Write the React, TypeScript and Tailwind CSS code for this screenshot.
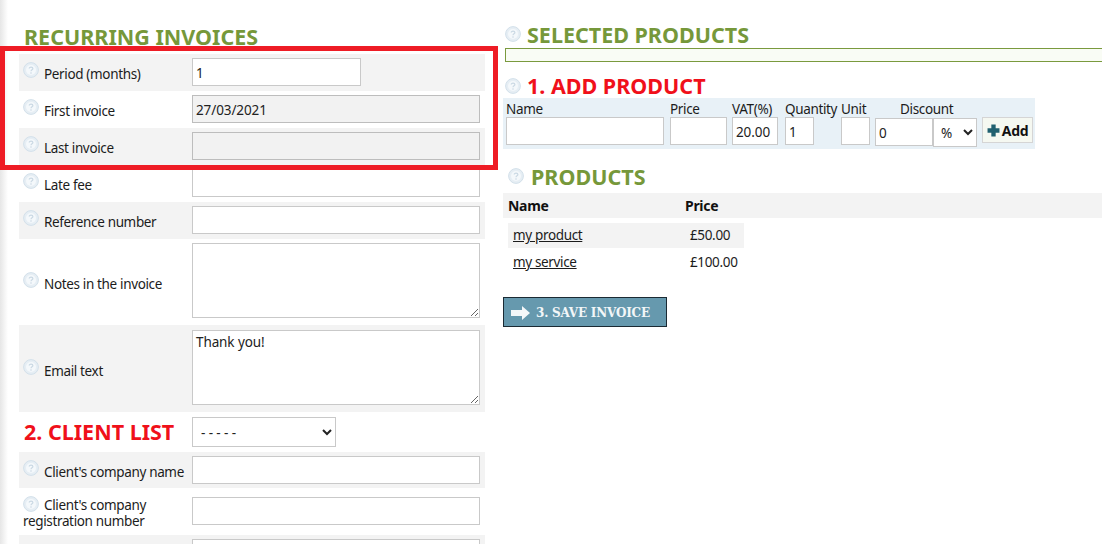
import React from "react";

const font = "font-['Noto_Sans',sans-serif]";
const inputCls = "block border px-[3px] pt-px text-[13.5px] tracking-[-0.1px] text-[#222] outline-none font-['Noto_Sans',sans-serif]";
const normal = "border-[#c9c9c9] bg-white";
const bodyText = "text-[13.5px] tracking-[-0.35px] text-[#1c1c1c]";
const heading = "text-[21.5px] font-bold whitespace-nowrap";

function Help({ className = "" }: { className?: string }) {
  return (
    <svg viewBox="0 0 16 16" className={`shrink-0 ${className}`} width="16" height="16">
      <circle cx="8" cy="8" r="7.4" fill="#e6eef4" stroke="#d3e0ea" strokeWidth="1" />
      <circle cx="8" cy="8" r="5" fill="#f4f8fb" />
      <path d="M6.2 6.5 C6.2 4.6 9.9 4.6 9.9 6.5 C9.9 7.8 8 7.7 8 9.3" fill="none" stroke="#cbd9e4" strokeWidth="1.2" />
      <circle cx="8" cy="11" r="0.8" fill="#cbd9e4" />
    </svg>
  );
}

function Row({
  label,
  gray,
  h,
  value = "",
  disabled,
  short,
}: {
  label: string;
  gray?: boolean;
  h: string;
  value?: string;
  disabled?: boolean;
  short?: boolean;
}) {
  return (
    <div className={`flex items-center ${h} ${gray ? "bg-[#f3f3f3]" : "bg-white"}`}>
      <div className="relative flex w-[173px] shrink-0 items-start pl-[4px]">
        <Help className="mt-[1px]" />
        <span className={`ml-[5px] mt-[3px] leading-[20px] whitespace-nowrap ${bodyText}`}>{label}</span>
      </div>
      <input
        readOnly
        value={value}
        className={`${inputCls} -mt-px h-[28px] ${short ? "w-[169px]" : "w-[288px]"} ${disabled ? "border-[#bdbdbd] bg-[#f2f2f2]" : normal}`}
      />
    </div>
  );
}

function AreaRow({ label, gray, h, mt, value = "" }: { label: string; gray?: boolean; h: string; mt: string; value?: string }) {
  return (
    <div className={`flex items-center ${h} ${gray ? "bg-[#f3f3f3]" : "bg-white"}`}>
      <div className="flex w-[173px] shrink-0 items-start pl-[4px]">
        <Help className="mt-[2px]" />
        <span className={`ml-[5px] mt-[4px] leading-[20px] whitespace-nowrap ${bodyText}`}>{label}</span>
      </div>
      <textarea readOnly value={value} className={`${inputCls} ${normal} ${mt} h-[75px] w-[288px] py-[3px]`} />
    </div>
  );
}

function Col({ label, labelCls, children, w }: { label: string; labelCls?: string; children: React.ReactNode; w: string }) {
  return (
    <div className={`flex flex-col ${w}`}>
      <span className={`h-[19px] leading-[22px] whitespace-nowrap ${bodyText} ${labelCls ?? ""}`}>{label}</span>
      {children}
    </div>
  );
}

export default function App() {
  return (
    <div className={`relative flex h-[544px] w-[1102px] overflow-hidden bg-white ${font}`}>
      <div className="w-[8px] shrink-0 bg-gradient-to-r from-[#e6e6e6] to-white" />

      <div className="ml-[11px] w-[466px] shrink-0">
        <h2 className={`h-[54px] pl-[5px] pt-[22px] leading-[30px] text-[#76983a] ${heading}`}>RECURRING INVOICES</h2>
        <Row label="Period (months)" gray h="h-[37px]" value="1" short />
        <Row label="First invoice" h="h-[37px]" value="27/03/2021" disabled />
        <Row label="Last invoice" gray h="h-[37px]" disabled />
        <Row label="Late fee" h="h-[37px]" />
        <Row label="Reference number" gray h="h-[37px]" />
        <AreaRow label="Notes in the invoice" h="h-[86px]" mt="-mt-[3px]" />
        <AreaRow label="Email text" gray h="h-[87px]" mt="-mt-[2px]" value="Thank you!" />
        <div className="flex h-[40px] items-center">
          <h2 className={`w-[173px] shrink-0 pl-[5px] text-[#f0101a] ${heading}`}>2. CLIENT LIST</h2>
          <select className={`${inputCls} ${normal} h-[30px] w-[144px] px-[4px]`} defaultValue="- - - - -">
            <option>- - - - -</option>
          </select>
        </div>
        <Row label="Client's company name" gray h="h-[36px]" />
        <div className="flex h-[47px] items-center bg-white">
          <div className={`mt-[2px] w-[173px] shrink-0 pl-[4px] leading-[16px] ${bodyText}`}>
            <Help className="-my-[4px] mr-[5px] inline-block -translate-y-[2px] align-middle" />
            Client's company registration number
          </div>
          <input readOnly className={`${inputCls} ${normal} -mt-px h-[28px] w-[288px]`} />
        </div>
        <div className="flex h-[37px] items-center bg-[#f3f3f3]">
          <div className="w-[173px] shrink-0" />
          <input readOnly className={`${inputCls} ${normal} -mt-px h-[28px] w-[288px]`} />
        </div>
      </div>

      <div className="ml-[18px] min-w-0 flex-1">
        <div className="flex h-[48px] items-center pl-[2px] pt-[22px]">
          <Help className="-mt-[2px]" />
          <h2 className={`ml-[6px] text-[#76983a] ${heading}`}>SELECTED PRODUCTS</h2>
        </div>
        <div className="ml-[2px] h-[14px] border border-r-0 border-[#7a9a3e] bg-[#f9fcf5]" />
        <div className="flex h-[36px] items-end pl-[2px]">
          <Help className="mb-[4px]" />
          <h2 className={`ml-[6px] leading-[24px] text-[#f0101a] ${heading}`}>1. ADD PRODUCT</h2>
        </div>
        <div className="flex h-[51px] w-[532px] bg-[#e8f1f7] pl-[3px]">
          <Col label="Name" w="w-[164px]">
            <input readOnly className={`${inputCls} ${normal} h-[28px] w-[158px]`} />
          </Col>
          <Col label="Price" w="w-[62px]">
            <input readOnly className={`${inputCls} ${normal} h-[28px] w-[57px]`} />
          </Col>
          <Col label="VAT(%)" w="w-[53px]">
            <input readOnly value="20.00" className={`${inputCls} ${normal} h-[28px] w-[46px]`} />
          </Col>
          <Col label="Quantity" w="w-[56px]">
            <input readOnly value="1" className={`${inputCls} ${normal} h-[28px] w-[29px]`} />
          </Col>
          <Col label="Unit" w="w-[34px]">
            <input readOnly className={`${inputCls} ${normal} h-[28px] w-[29px]`} />
          </Col>
          <Col label="Discount" labelCls="pl-[25px]" w="w-[107px]">
            <div className="mt-[1px] flex">
              <input readOnly value="0" className={`${inputCls} ${normal} h-[28px] w-[58px]`} />
              <select className={`${inputCls} ${normal} h-[29px] w-[44px] px-[1px]`} defaultValue="%">
                <option>%</option>
              </select>
            </div>
          </Col>
          <button className="mt-[19px] flex h-[26px] w-[51px] items-center justify-center gap-[2px] border border-[#d5d5d5] bg-[#f5f8f1] text-[14px] font-bold tracking-[-0.3px] text-[#111]">
            <svg viewBox="0 0 12 12" width="13" height="13">
              <path d="M4 0.5h4v3.5h3.5v4H8v3.5H4V8H0.5V4H4z" fill="#20606f" />
            </svg>
            Add
          </button>
        </div>

        <div className="flex h-[44px] items-end pl-[5px] pb-[1px]">
          <Help className="mb-[8px]" />
          <h2 className={`ml-[7px] leading-[30px] text-[#76983a] ${heading}`}>PRODUCTS</h2>
        </div>
        <div className="flex h-[25px] items-center bg-[#f3f3f3] pl-[5px] text-[14px] font-bold tracking-[-0.3px] text-[#111]">
          <span className="w-[177px]">Name</span>
          <span>Price</span>
        </div>
        <div className={`ml-[5px] mt-[5px] flex h-[25px] w-[236px] items-center bg-[#f3f3f3] pl-[5px] ${bodyText}`}>
          <a className="w-[177px] underline">my product</a>
          <span>£50.00</span>
        </div>
        <div className={`ml-[5px] mt-[1px] flex h-[26px] w-[236px] items-center pl-[5px] ${bodyText}`}>
          <a className="w-[177px] underline">my service</a>
          <span>£100.00</span>
        </div>
        <button className="mt-[22px] flex h-[30px] w-[164px] items-center border border-[#1b2a33] bg-[#6699ae] pl-[7px] pt-px font-['DejaVu_Serif',serif] text-[12px] font-bold tracking-[-0.2px] whitespace-nowrap text-[#f2f6f8]">
          <svg viewBox="0 0 20 14" width="20" height="14" className="mr-[5px]">
            <path d="M0 4h11V0l8 7-8 7v-4H0z" fill="#f4f7f9" />
          </svg>
          3. SAVE INVOICE
        </button>
      </div>

      <div className="pointer-events-none absolute left-0 top-[46px] h-[124px] w-[498px] border-[5px] border-[#ee1c25]" />
    </div>
  );
}
